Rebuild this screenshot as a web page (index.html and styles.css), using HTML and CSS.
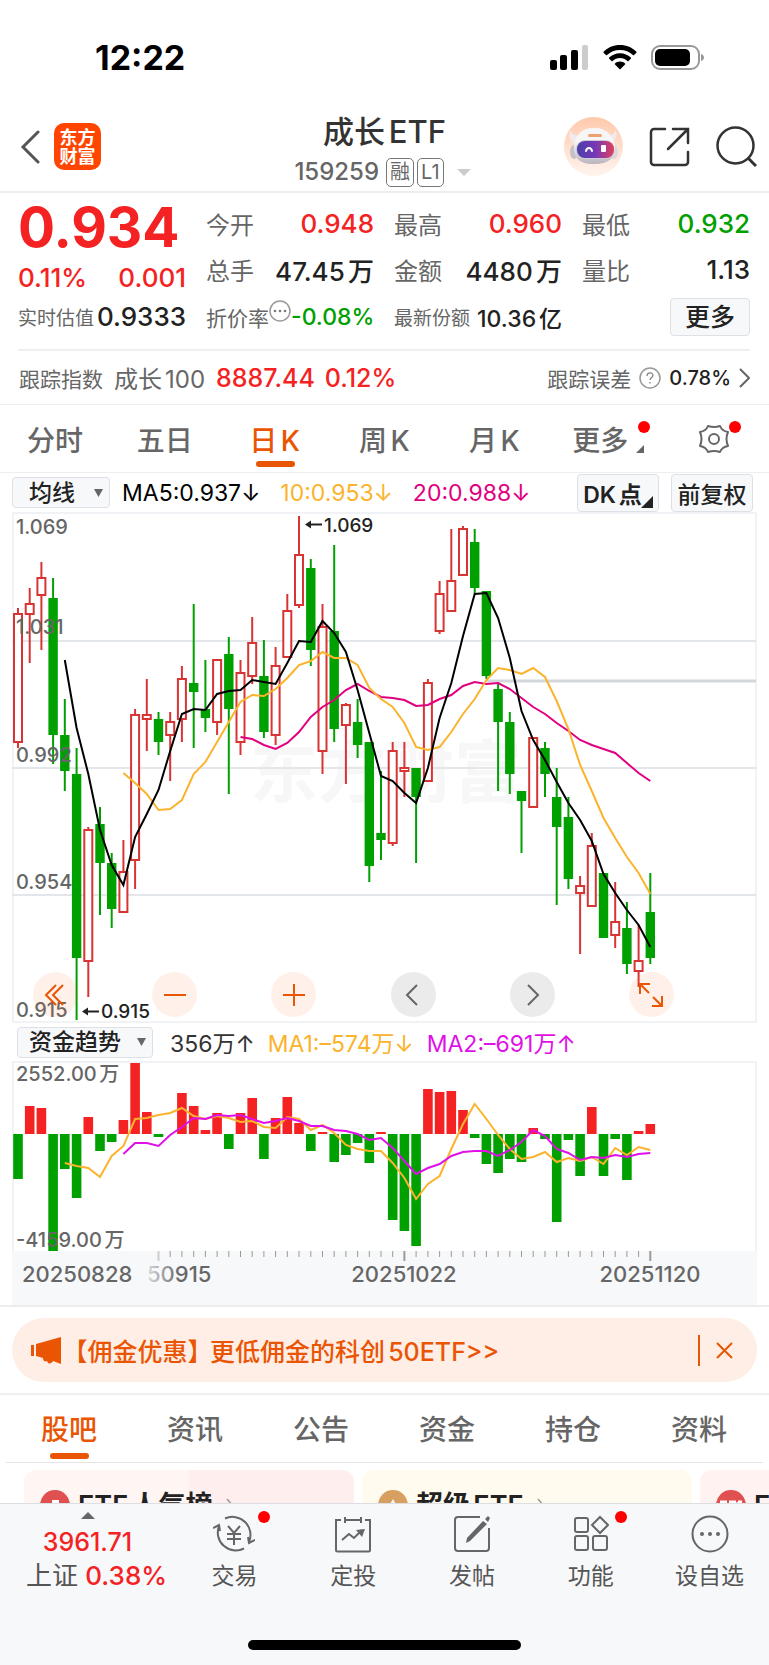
FILE: index.html
```html
<!DOCTYPE html>
<html lang="zh-CN">
<head>
  <meta charset="UTF-8" />
  <meta name="viewport" content="width=device-width, initial-scale=1" />
  <title>成长ETF 159259</title>
  <link rel="stylesheet" href="styles.css">
</head>
<body>
  <div class="status-bar">
    <span class="clock">12:22</span>
    <div class="status-icons">
      <svg width="39" height="25" viewBox="0 0 39 25">
        <rect x="0" y="15" width="7" height="10" rx="2" />
        <rect x="10" y="10" width="7" height="15" rx="2" />
        <rect x="21" y="5" width="7" height="20" rx="2" />
        <rect x="32" y="0" width="6" height="25" rx="2" fill="#ccc" />
      </svg>
      <svg width="34" height="25" viewBox="0 0 34 25">
        <path d="M17 0C10.500 0 4.600 2.500 .6 6.700a.8.8 0 0 0 0 1.100l2.300 2.300c.3.300.8.300 1.100 0C7.400 6.800 11.900 4.900 17 4.900s9.600 1.900 13 5.200c.3.300.8.300 1.100 0l2.300-2.300a.8.8 0 0 0 0-1.100C29.400 2.500 23.500 0 17 0z" />
        <path d="M17 8.300c-4.200 0-8 1.600-10.800 4.300a.8.8 0 0 0 0 1.100l2.300 2.300c.3.300.8.300 1.100 0 2-1.800 4.600-2.900 7.400-2.900s5.400 1.100 7.400 2.900c.3.300.8.300 1.100 0l2.300-2.300a.8.8 0 0 0 0-1.100C25 9.900 21.200 8.300 17 8.300z" />
        <path d="M17 16.500c-1.900 0-3.700.7-5 1.900a.8.8 0 0 0 0 1.200l4.400 4.500c.3.300.8.300 1.100 0l4.500-4.500a.8.8 0 0 0 0-1.200c-1.300-1.200-3.100-1.900-5-1.900z" />
      </svg>
      <svg width="53" height="25" viewBox="0 0 53 25">
        <rect x="1" y="1" width="47" height="23" rx="8" fill="none" stroke="#999" stroke-width="2" />
        <rect x="4" y="4" width="35" height="17" rx="5" />
        <path d="M50 9c2 .5 3 2 3 3.500s-1 3-3 3.500z" fill="#999" />
      </svg>
    </div>
  </div>

  <header class="top-bar">
    <div class="top-left">
      <button class="icon-btn" aria-label="返回">
        <svg width="20" height="34" viewBox="0 0 20 34"><path d="M18 2L3 17l15 15" fill="none" stroke="#555" stroke-width="3" stroke-linecap="round" /></svg>
      </button>
      <div class="logo">东方<br>财富</div>
    </div>
    <div class="title-box">
      <h1>成长ETF</h1>
      <div class="code">159259 <span class="tag">融</span><span class="tag">L1</span>
        <svg width="14" height="7" viewBox="0 0 14 7"><path d="M0 0h14L7 7z" fill="#ccc" /></svg>
      </div>
    </div>
    <div class="top-right">
      <svg width="59" height="59" viewBox="0 0 59 59">
        <defs>
          <linearGradient id="halo" x1="0" y1="0" x2="0" y2="1"><stop offset="0" stop-color="#ffc9ab" /><stop offset="1" stop-color="#fff4ef" /></linearGradient>
          <linearGradient id="head" x1="0" y1="0" x2="0" y2="1"><stop offset=".4" stop-color="#f8f5f7" /><stop offset="1" stop-color="#b9b4bd" /></linearGradient>
          <linearGradient id="visor" x1="0" y1="0" x2="1" y2="0"><stop offset="0" stop-color="#4a3fa8" /><stop offset=".5" stop-color="#7638b8" /><stop offset="1" stop-color="#e0405c" /></linearGradient>
        </defs>
        <circle cx="29.500" cy="29.500" r="29.500" fill="url(#halo)" />
        <path d="M7 13c0 4 3 6 8 5l-5 9c-4-4-6-10-3-14zM51 13c0 4-3 6-7 5l4 9c4-4 6-10 3-14z" fill="#f1ebee" />
        <ellipse cx="10" cy="35" rx="4" ry="7" fill="#c6c1c9" />
        <ellipse cx="50" cy="35" rx="4" ry="7" fill="#dcd8de" />
        <path d="M20 13c6-3 14-3 20 0 6 3 11 10 11 18 0 10-6 16-21 16S10 41 10 31c0-8 4-15 10-18z" fill="url(#head)" />
        <rect x="24" y="17" width="14" height="3" rx="1.500" fill="#eda070" />
        <rect x="12" y="23" width="38" height="19" rx="9" fill="#cfcad4" />
        <rect x="13" y="24" width="37" height="17" rx="8" fill="url(#visor)" />
        <path d="M22 34c1-4 5-4 6 0" fill="none" stroke="#fff" stroke-width="2" stroke-linecap="round" />
        <rect x="37" y="28" width="5" height="7" rx="1" fill="#fff" />
      </svg>
      <button class="icon-btn" aria-label="分享">
        <svg width="41" height="40" viewBox="0 0 41 40"><path d="M16 2H5a3 3 0 0 0-3 3v30a3 3 0 0 0 3 3h31a3 3 0 0 0 3-3V25M24 2h15v14M38 3L19 22" fill="none" stroke="#333" stroke-width="2.500" stroke-linecap="round" /></svg>
      </button>
      <button class="icon-btn" aria-label="搜索">
        <svg width="41" height="41" viewBox="0 0 41 41"><circle cx="19.500" cy="19.500" r="18" fill="none" stroke="#333" stroke-width="2.500" /><path d="M32 32l8 8" stroke="#333" stroke-width="3" /></svg>
      </button>
    </div>
  </header>

  <main class="content">
    <section class="quote">
      <div class="price-box">
        <strong class="price">0.934</strong>
        <div class="change"><span>0.11%</span><span>0.001</span></div>
      </div>
      <div class="item"><span>今开</span><b class="up">0.948</b></div>
      <div class="item"><span>最高</span><b class="up">0.960</b></div>
      <div class="item"><span>最低</span><b class="down">0.932</b></div>
      <div class="item"><span>总手</span><b>47.45万</b></div>
      <div class="item"><span>金额</span><b>4480万</b></div>
      <div class="item"><span>量比</span><b>1.13</b></div>
      <div class="item small"><span>实时估值</span><b>0.9333</b></div>
      <div class="item small"><span class="rate">折价率</span>
        <svg class="hint" width="22" height="22" viewBox="0 0 22 22"><circle cx="11" cy="11" r="10" fill="none" stroke="#999" stroke-width="1.500" /><g fill="#777"><circle cx="6" cy="11" r="1.300" /><circle cx="11" cy="11" r="1.300" /><circle cx="16" cy="11" r="1.300" /></g></svg>
        <b class="down rate">-0.08%</b></div>
      <div class="item small"><span>最新份额</span><b class="share">10.36亿</b></div>
      <button class="more-btn">更多</button>
    </section>

    <a class="track" href="#track">
      <span>跟踪指数</span><span class="track-name">成长100</span>
      <b class="up">8887.44</b><b class="up">0.12%</b>
      <span class="track-right">跟踪误差
        <svg width="22" height="22" viewBox="0 0 22 22"><circle cx="11" cy="11" r="10" fill="none" stroke="#999" stroke-width="1.500" /><path d="M8 9c0-4 6-4 6-.5 0 2-3 2.300-3 4.500M11 15v1.500" fill="none" stroke="#888" stroke-width="1.300" /></svg>
        <em>0.78%</em>
        <svg width="11" height="20" viewBox="0 0 11 20"><path d="M1 1l9 9-9 9" fill="none" stroke="#666" stroke-width="2" /></svg>
      </span>
    </a>

    <nav class="period-tabs">
      <button>分时</button>
      <button>五日</button>
      <button class="active">日K</button>
      <button>周K</button>
      <button>月K</button>
      <button class="with-corner">更多<i class="dot"></i><i class="corner"></i></button>
      <button aria-label="设置"><svg width="32" height="30" viewBox="0 0 32 30"><path d="M10 2Q16 4 22 2Q24 7 30 8Q27 15 30 22Q24 23 22 28Q16 26 10 28Q8 23 2 22Q5 15 2 8Q8 7 10 2z" fill="none" stroke="#666" stroke-width="2" stroke-linejoin="round" /><circle cx="16" cy="15" r="5" fill="none" stroke="#666" stroke-width="2" /></svg><i class="dot"></i></button>
    </nav>

    <section class="charts">
      <div class="legend">
        <select class="pick" aria-label="主图指标"><option>均线</option></select>
        <span>MA5:0.937↓</span>
        <span class="ma10">10:0.953↓</span>
        <span class="ma20">20:0.988↓</span>
        <div class="legend-btns">
          <button class="box-btn dk">DK点</button>
          <button class="box-btn">前复权</button>
        </div>
      </div>
      <div class="k-wrap">
        <svg id="kChart" class="chart" viewBox="0 0 745 511"></svg>
        <div class="chart-btns">
          <button aria-label="展开"><svg viewBox="0 0 24 24"><path d="M12 2L2 12l10 10M19 2L9 12l10 10" /></svg></button>
          <button aria-label="缩小"><svg viewBox="0 0 24 24"><path d="M1 12h22" /></svg></button>
          <button aria-label="放大"><svg viewBox="0 0 24 24"><path d="M1 12h22M12 1v22" /></svg></button>
          <button class="gray" aria-label="向左"><svg viewBox="0 0 24 24"><path d="M16 2L6 12l10 10" /></svg></button>
          <button class="gray" aria-label="向右"><svg viewBox="0 0 24 24"><path d="M8 2l10 10L8 22" /></svg></button>
          <button aria-label="全屏"><svg viewBox="0 0 24 24"><path d="M10 10L2 2M1 11V1h10M14 14l8 8M13 23h10V13" /></svg></button>
        </div>
      </div>
      <div class="legend fund">
        <select class="pick wide" aria-label="副图指标"><option>资金趋势</option></select>
        <span class="dark">356万↑</span>
        <span class="ma10">MA1:–574万↓</span>
        <span class="ma2">MA2:–691万↑</span>
      </div>
      <svg id="fundChart" class="chart" viewBox="0 0 745 244"></svg>
    </section>

    <div class="banner-wrap">
      <div class="banner">
        <svg width="31" height="27" viewBox="0 0 31 27" fill="#ea5504"><path d="M0 8h3v11H0zM5 7L30 0v27l-8-3c-1 2-3 3-5 2l-1-2c-2 1-4 0-4-3l-7-2z" /></svg>
        <a href="#promo"><span>【佣金优惠】</span>更低佣金的科创50ETF&gt;&gt;</a>
        <button class="icon-btn close" aria-label="关闭"><svg width="17" height="17" viewBox="0 0 17 17"><path d="M1 1l15 15M16 1L1 16" stroke="#ea5504" stroke-width="2" /></svg></button>
      </div>
    </div>

    <nav class="info-tabs">
      <button class="active">股吧</button>
      <button>资讯</button>
      <button>公告</button>
      <button>资金</button>
      <button>持仓</button>
      <button>资料</button>
    </nav>

    <div class="feed">
      <a class="card pink" href="#rank">
        <svg width="30" height="30" viewBox="0 0 30 30"><circle cx="15" cy="15" r="15" fill="#e05050" /><path d="M12 10h7v10H7v-5h5z" fill="#fff" /></svg>
        ETF人气榜
        <svg class="arrow" width="8" height="16" viewBox="0 0 8 16"><path d="M1 1l6 7-6 7" fill="none" stroke="#999" stroke-width="1.500" /></svg>
      </a>
      <a class="card yellow" href="#super">
        <svg width="30" height="30" viewBox="0 0 30 30"><circle cx="15" cy="15" r="15" fill="#d8a060" /><path d="M4 14l6 4 5-9 5 9 6-4-3 11H7z" fill="#fff" /></svg>
        超级ETF
        <svg class="arrow" width="8" height="16" viewBox="0 0 8 16"><path d="M1 1l6 7-6 7" fill="none" stroke="#999" stroke-width="1.500" /></svg>
      </a>
      <a class="card pink plain" href="#etf">
        <svg width="30" height="30" viewBox="0 0 30 30"><circle cx="15" cy="15" r="15" fill="#e05050" /><path d="M4 12h7M13 12h7M22 12h4M6 12v9M15 12v9M22 12v9" stroke="#fff" stroke-width="3" /></svg>
        ETF
      </a>
    </div>
  </main>

  <footer class="bottom-bar">
    <div class="bottom-row">
      <a class="index" href="#sh">
        <svg width="14" height="7" viewBox="0 0 14 7"><path d="M0 7h14L7 0z" fill="#666" /></svg>
        <span class="up">3961.71</span>
        <span>上证 <b class="up">0.38%</b></span>
      </a>
      <button>
        <svg width="42" height="38" viewBox="0 0 42 38"><path d="M12 3.500A18 18 0 0 1 36 27M31 33.500A18 18 0 0 1 6 11" /><path d="M0 13l6-3 1 6M42 25l-6 3-1-6M15 11l6 7 6-7M21 18v12M14 19h14M14 24h14" /></svg>
        交易<i class="dot"></i>
      </button>
      <button>
        <svg width="36" height="38" viewBox="0 0 36 38"><path d="M6 5H1v30a1.500 1.500 0 0 0 1.500 1.500h31A1.500 1.500 0 0 0 35 35V5h-5M10 5h16M10 2v6M26 2v6M7 25l7-6 5 4 8-8" /><path d="M21 15l9-1-3 8z" fill="#666" stroke="none" /></svg>
        定投
      </button>
      <button>
        <svg width="36" height="38" viewBox="0 0 36 38"><path d="M26 2H4a3 3 0 0 0-3 3v28a3 3 0 0 0 3 3h28a3 3 0 0 0 3-3V13" /><path d="M29 6l4 3-17 17-4 2 1-5zM31 4l3-3 2 2-2 4z" fill="#666" stroke="none" /></svg>
        发帖
      </button>
      <button>
        <svg width="36" height="38" viewBox="0 0 36 38"><rect x="2" y="3" width="13" height="14" rx="2" /><rect x="2" y="21" width="13" height="14" rx="2" /><rect x="20" y="21" width="14" height="14" rx="2" /><path d="M27 2l8 8-8 8-8-8z" /></svg>
        功能<i class="dot"></i>
      </button>
      <button>
        <svg width="38" height="38" viewBox="0 0 38 38"><circle cx="19" cy="19" r="17.500" /><g fill="#666" stroke="none"><circle cx="11" cy="19" r="2" /><circle cx="19" cy="19" r="2" /><circle cx="27" cy="19" r="2" /></g></svg>
        设自选
      </button>
    </div>
    <div class="home-line"></div>
  </footer>

  <script src="chart.js"></script>
</body>
</html>
```
FILE: styles.css
```css
* { box-sizing: border-box; }
body {
  margin: 0;
  height: 100vh;
  display: flex;
  flex-direction: column;
  overflow: hidden;
  background: #fff;
  color: #222;
  font-family: Inter, "Noto Sans CJK SC", sans-serif;
  text-autospace: normal;
}
button { border: 0; padding: 0; background: none; font: inherit; color: inherit; }
a { color: inherit; text-decoration: none; }
b { font-weight: 500; }
svg { display: block; flex: none; }
.up { color: #f42222; }
.down { color: #00a000; }
.dot { position: absolute; width: 12px; height: 12px; border-radius: 50%; background: #f00; }

/* status bar */
.status-bar { height: 102px; padding: 12px 65px 0 95px; display: flex; align-items: center; justify-content: space-between; flex: none; }
.clock { font-size: 34px; font-weight: 700; color: #000; }
.status-icons { display: flex; gap: 14px; }

/* header */
.top-bar { height: 91px; padding: 0 12px; display: grid; grid-template-columns: 1fr auto 1fr; border-bottom: 2px solid #ededed; flex: none; }
.top-left { display: flex; align-items: center; gap: 14px; padding-left: 8px; }
.top-right { display: flex; align-items: center; justify-content: flex-end; gap: 26px; }
.logo { width: 47px; height: 47px; padding-top: 5px; border-radius: 10px; background: #ff4500; color: #fff; font-size: 18px; line-height: 19px; font-weight: 700; text-align: center; }
.title-box { text-align: center; }
h1 { margin: 8px 0 0; font-size: 31px; line-height: 44px; font-weight: 500; color: #333; }
.code { display: flex; align-items: center; justify-content: center; padding-right: 4px; font-size: 24px; line-height: 36px; font-weight: 500; color: #666; }
.tag { margin-left: 3px; padding: 0 3px; height: 29px; line-height: 26px; border: 1px solid #777; border-radius: 5px; font-size: 20px; font-weight: 400; }
.tag:first-of-type { margin-left: 7px; }
.code svg { margin-left: 13px; }

/* quote */
.quote { display: grid; grid-template-columns: repeat(4, minmax(0, 1fr)); grid-template-rows: 46px 47px 47px; column-gap: 20px; margin: 0 19px 0 18px; padding: 7px 0 9px; border-bottom: 2px solid #f0f0f0; }
.price-box { grid-row: 1 / 3; color: #f42222; }
.price { display: block; font-size: 55px; line-height: 54px; font-weight: 700; }
.change { display: flex; justify-content: space-between; font-size: 26px; line-height: 48px; font-weight: 500; }
.item { display: flex; align-items: center; justify-content: space-between; font-size: 24px; white-space: nowrap; color: #666; }
.item b { font-size: 26px; color: #222; }
.item b.up { color: #f42222; }
.item b.down { color: #00a000; }
.small { font-size: 19px; }
.small b { font-size: 26px; }
.small .rate { font-size: 21px; }
.small b.rate, .small .share { font-size: 23px; }
.hint { margin-bottom: 12px; }
.more-btn { justify-self: end; align-self: center; width: 80px; height: 38px; border: 1px solid #dde0e6; border-radius: 4px; background: #f7f8fa; font-size: 25px; line-height: 34px; font-weight: 500; }

.track { display: flex; align-items: center; height: 54px; padding: 0 19px; border-bottom: 1px solid #eee; font-size: 21px; color: #666; }
.track-name { margin: 0 11px; font-size: 24px; }
.track b { margin-right: 10px; font-size: 25px; }
.track-right { display: flex; align-items: center; gap: 8px; margin-left: auto; }
.track em { font-style: normal; font-size: 20px; color: #222; font-weight: 500; }

/* tabs */
.period-tabs { display: grid; grid-template-columns: repeat(7, 1fr); justify-items: center; height: 68px; border-bottom: 1px solid #eee; font-size: 28px; font-weight: 500; color: #666; }
.period-tabs button { position: relative; display: flex; align-items: center; }
.period-tabs .active, .info-tabs .active { color: #ea5504; }
.period-tabs .active::after, .info-tabs .active::after { content: ""; position: absolute; left: 50%; bottom: 5px; width: 39px; height: 6px; margin-left: -19px; border-radius: 3px; background: #ea5504; }
.period-tabs .dot { top: 16px; right: -11px; }
.period-tabs .with-corner { right: 4px; }
.period-tabs .with-corner .dot { right: -22px; }
.corner { position: absolute; right: -16px; bottom: 19px; border: 4px solid transparent; border-right-color: #666; border-bottom-color: #666; }

/* charts */
.charts { padding: 0 12px; border-bottom: 2px solid #ededf0; }
.legend { display: flex; align-items: center; gap: 20px; height: 39px; font-size: 23px; color: #000; white-space: nowrap; text-autospace: no-autospace; }
.pick {
  appearance: none;
  width: 98px;
  height: 31px;
  margin-right: -8px;
  padding: 0 0 0 16px;
  border: 1px solid #dde0e6;
  border-radius: 4px;
  background: #f7f8fa url("data:image/svg+xml,%3Csvg xmlns='http://www.w3.org/2000/svg' width='9' height='8'%3E%3Cpath d='M0 0h9L4.500 8z' fill='%23666'/%3E%3C/svg%3E") no-repeat right 6px center;
  font: 500 23px/28px Inter, "Noto Sans CJK SC", sans-serif;
  color: #222;
}
.pick.wide { width: 136px; padding-left: 11px; margin: 0 4px 0 5px; }
.fund { gap: 13px; height: 38px; }
.dark { color: #333; }
.ma10 { color: #fcb32c; }
.ma20 { color: #e00080; }
.ma2 { color: #e010e8; }
.legend-btns { display: flex; gap: 12px; margin-left: auto; padding-right: 4px; text-autospace: normal; }
.box-btn { position: relative; width: 82px; height: 38px; border: 1px solid #dde0e6; border-radius: 4px; background: #f7f8fa; font-size: 23px; font-weight: 500; color: #222; }
.dk { padding-right: 11px; font-weight: 600; white-space: nowrap; }
.dk::after { content: ""; position: absolute; right: 5px; bottom: 3px; border: 6px solid transparent; border-right-color: #222; border-bottom-color: #222; }
.k-wrap { position: relative; }
.chart { width: 100%; height: auto; }
.chart-btns { position: absolute; left: 21px; right: 83px; bottom: 6px; display: flex; justify-content: space-between; }
.chart-btns button { width: 45px; height: 45px; border-radius: 50%; background: rgba(255, 110, 50, .1); }
.chart-btns .gray { background: #ebebeb; }
.chart-btns svg { width: 24px; height: 24px; margin: auto; fill: none; stroke: #ea5504; stroke-width: 2; }
.chart-btns .gray svg { stroke: #666; }

/* promo */
.banner-wrap { padding: 11px 12px; border-bottom: 2px solid #f0f0f0; }
.banner { display: flex; align-items: center; height: 64px; padding: 0 24px 0 19px; border-radius: 32px; background: #feeee6; color: #ea5504; font-size: 25px; font-weight: 500; }
.banner a { margin-left: 13px; white-space: nowrap; }
.banner a span { margin-right: 10px; font-feature-settings: "halt"; }
.close { margin-left: auto; padding: 7px 0 7px 16px; border-left: 2px solid #ea5504; }

.info-tabs { display: flex; justify-content: space-between; height: 68px; margin: 0 6px; padding: 0 36px 2px 35px; border-bottom: 1px solid #e5e5e5; font-size: 28px; font-weight: 500; color: #666; }
.info-tabs button { position: relative; }
.info-tabs .active::after { bottom: 1px; }

/* feed goes under the bottom bar */
.content { flex: 1; min-height: 0; overflow: hidden; }
.feed { display: flex; gap: 8px; padding: 7px 0 0 24px; }
.card { flex: none; width: 330px; height: 100px; padding: 12px 16px; display: flex; align-items: flex-start; gap: 8px; border-radius: 12px; font-size: 27px; line-height: 48px; font-weight: 600; color: #222; }
.card svg { margin-top: 8px; }
.card .arrow { margin: 16px 0 0 6px; }
.pink { background: linear-gradient(90deg, #fff5f3 50%, #feeeed 50%); }
.plain { background: #fff2f0; }
.yellow { background: #fffbee; }

/* bottom bar */
.bottom-bar { flex: none; height: 162px; border-top: 1px solid #dcdee2; background: #f7f8fa; }
.bottom-row { display: grid; grid-template-columns: 175px repeat(5, 1fr); height: 136px; font-size: 23px; color: #555; }
.bottom-row button { position: relative; display: flex; flex-direction: column; align-items: center; padding-top: 11px; line-height: 46px; }
.bottom-row button svg { fill: none; stroke: #666; stroke-width: 2; }
.bottom-row .dot { top: 7px; left: 50%; margin-left: 24px; }
.index { display: flex; flex-direction: column; align-items: center; padding: 8px 0 0 18px; font-size: 26px; line-height: 34px; white-space: nowrap; }
.index svg { margin: 0 0 6px -18px; }
.index > .up { font-weight: 500; margin-left: -18px; font-size: 25px; }
.home-line { width: 273px; height: 10px; margin: 0 auto; border-radius: 5px; background: #000; }
```
FILE: chart.js
```js
const STEP = 11.71;
const FIRST = 6;
const px = i => (FIRST + i * STEP).toFixed(1);

// [high, top of body, bottom of body, low, rising]
const candles = [
  [96,102,230,236,1],[76,92,102,151,1],[50,66,83,138,1],[66,86,223,252,0],[187,223,259,279,0],
  [236,262,446,508,0],[315,318,449,485,1],[295,312,351,403,0],[341,351,397,416,0],[328,360,400,400,1],
  [197,203,348,377,1],[167,203,207,239,1],[200,207,230,243,0],[200,210,223,269,1],[154,167,207,230,1],
  [92,171,180,236,0],[148,197,206,220,0],[148,148,210,223,1],[125,142,197,282,0],[148,161,230,243,1],
  [105,131,164,172,1],[128,164,220,226,0],[135,154,223,233,1],[82,99,145,145,1],[4,43,93,96,1],
  [47,56,138,154,0],[92,115,239,262,1],[33,119,217,230,0],[191,193,213,272,1],[187,210,233,246,0],
  [230,230,354,370,0],[259,321,328,348,0],[230,239,331,334,1],[230,256,259,285,1],[256,256,285,351,0],
  [167,171,269,269,1],[69,82,119,122,1],[17,69,99,99,1],[14,17,63,63,1],[17,30,76,82,0],
  [79,79,164,167,0],[171,177,210,279,0],[200,210,262,282,0],[279,279,289,341,0],[226,226,295,295,1],
  [230,236,262,285,0],[256,285,315,393,0],[285,305,367,377,0],[364,374,381,442,1],[321,334,394,394,1],
  [361,361,426,426,0],[370,410,423,436,1],[390,416,452,462,0],[413,449,459,475,1],[361,400,446,452,0]
];
const ma5 = [148,216,262,318,353,373,325,302,278,239,202,197,198,182,179,178,168,170,172,151,129,130,109,121,140,178,221,264,269,281,291,256,206,171,124,82,81,106,146,199,228,248,270,291,308,329,362,381,398,413,435];
const ma10 = [261,271,282,298,297,288,262,250,230,210,190,183,184,177,166,153,149,140,146,146,153,176,187,195,211,235,238,235,220,202,187,168,156,158,162,156,165,189,217,253,279,306,326,345,361,382];
const ma20 = [225,227,233,237,231,220,205,195,188,178,172,179,185,186,188,194,193,187,183,174,170,172,171,177,186,195,202,211,219,228,233,237,241,251,261,269];

// bar ends, zero line is at 73
const ZERO = 73;
const funds = [118,45,47,190,108,137,56,90,81,59,2,51,76,73,32,45,69,52,88,52,37,98,57,36,62,90,71,101,94,82,102,71,159,170,185,28,31,30,49,77,103,112,98,101,67,78,161,79,115,46,115,78,119,70,63];
const fund1 = [102,105,107,116,95,85,58,57,54,52,47,55,58,55,57,61,60,66,67,56,58,69,64,72,84,88,90,90,102,117,138,123,115,88,63,43,58,74,88,98,96,91,101,97,100,96,103,87,94,86,89];
const fund2 = [93,82,82,85,74,66,57,58,54,55,54,58,62,60,57,60,65,65,69,70,73,79,77,87,100,113,107,103,95,91,90,90,95,89,81,69,75,88,92,99,96,97,94,96,93,92];

function line(values, start, color) {
  const points = values.map((y, i) => px(start + i) + ',' + y).join(' ');
  return `<polyline points="${points}" fill="none" stroke="${color}" stroke-width="2" />`;
}

function text(x, y, str, size = 20, fill = '#666', extra = '') {
  return `<text x="${x}" y="${y}" font-size="${size}" font-weight="500" fill="${fill}" ${extra}>${str}</text>`;
}

function drawK() {
  let s = '<text x="238" y="285" font-size="68" font-weight="700" fill="#f7f7f7">东方财富</text>';
  s += '<path d="M0 129H744M0 256H744M0 383H744" stroke="#e3e6eb" stroke-width="2" />';
  s += '<rect x="1" y="1" width="743" height="509" fill="none" stroke="#e3e6eb" />';
  s += '<path d="M475 169H744" stroke="#d3d6da" stroke-width="3" />';
  candles.forEach(([high, top, bottom, low, rising], i) => {
    const x = +px(i);
    const color = rising ? '#d83434' : '#00a000';
    s += `<path d="M${x} ${high}V${low}" stroke="${color}" stroke-width="2" />`;
    s += rising
      ? `<rect x="${x - 4}" y="${top}" width="8" height="${bottom - top}" fill="#fff" stroke="${color}" stroke-width="2" />`
      : `<rect x="${x - 4.7}" y="${top}" width="9.400" height="${bottom - top}" fill="${color}" />`;
  });
  s += line(ma20, 19, '#e00080') + line(ma10, 9, '#fcb32c') + line(ma5, 4, '#000');
  s += text(4, 22, '1.069') + text(4, 122, '1.031') + text(4, 250, '0.992') + text(4, 377, '0.954') + text(4, 505, '0.915');
  s += text(312, 20, '1.069', 19, '#222') + text(89, 506, '0.915', 19, '#222');
  s += '<path d="M296 12.500h14M73 499.500h14" stroke="#222" stroke-width="2" /><path d="M293 12.500l6-4v8zM70 499.500l6-4v8z" fill="#222" />';
  document.getElementById('kChart').innerHTML = s;
}

function drawFund() {
  let s = '<rect x="1" y="1" width="743" height="196" fill="none" stroke="#e3e6eb" />';
  s += '<rect y="190" width="745" height="54" fill="#f7f8fa" />';
  funds.forEach((end, i) => {
    if (end === ZERO) return;
    s += `<rect x="${+px(i) - 4.8}" y="${Math.min(end, ZERO)}" width="9.600" height="${Math.abs(end - ZERO)}" fill="${end < ZERO ? '#f42222' : '#00a000'}" />`;
  });
  s += line(fund1, 4, '#fcb32c') + line(fund2, 9, '#e010e8');
  s += text(4, 20, '2552.00万') + text(4, 186, '-4159.00万');
  for (let i = 12; i < 55; i++) {
    const major = (i - 12) % 21 === 0;
    s += `<path d="M${px(i)} 190v${major ? 10 : 6}" stroke="${i === 12 ? '#ccc' : '#999'}" stroke-width="${major ? 2 : 1}" />`;
  }
  s += '<defs><linearGradient id="fade"><stop offset="0" stop-color="#ddd" /><stop offset=".5" stop-color="#666" /></linearGradient></defs>';
  s += text(10, 221, '20250828', 22) + text(135, 221, '50915', 22, 'url(#fade)');
  s += text(392, 221, '20251022', 22, '#666', 'text-anchor="middle"') + text(638, 221, '20251120', 22, '#666', 'text-anchor="middle"');
  document.getElementById('fundChart').innerHTML = s;
}

drawK();
drawFund();
```
